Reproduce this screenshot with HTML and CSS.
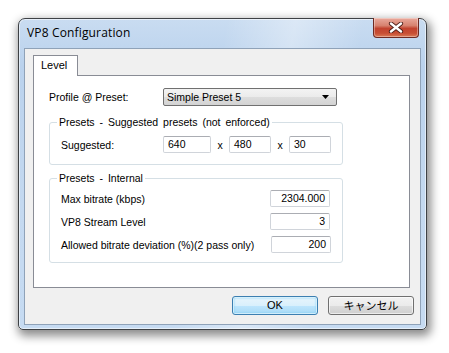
FILE: index.html
```html
<!DOCTYPE html>
<html>
<head>
<meta charset="utf-8">
<link rel="stylesheet" href="styles.css">
</head>
<body>
<div class="desk">
  <div class="window">
    <div class="titlebar">
      <span class="title">VP8 Configuration</span>
      <div class="close">
        <svg width="16" height="11" viewBox="0 0 16 11">
          <path d="M3 1.5 L13 9.5 M13 1.5 L3 9.5" stroke="#4a1c16" stroke-width="4.2" stroke-linecap="round"/>
          <path d="M3 1.5 L13 9.5 M13 1.5 L3 9.5" stroke="#ffffff" stroke-width="2.4" stroke-linecap="round"/>
        </svg>
      </div>
    </div>
    <div class="client">
      <div class="tabs"><div class="tab">Level</div></div>
      <div class="panel">
        <div class="profile">
          <span class="lbl">Profile @ Preset:</span>
          <div class="select">
            <span>Simple Preset 5</span>
            <svg width="8" height="5" viewBox="0 0 8 5"><path d="M0 0 H7 L3.5 4 Z" fill="#000"/></svg>
          </div>
        </div>
        <div class="group g1">
          <span class="legend">Presets - Suggested presets (not enforced)</span>
          <div class="sugg">
            <span class="lbl">Suggested:</span>
            <div class="box w1">640</div>
            <span class="times">x</span>
            <div class="box w2">480</div>
            <span class="times">x</span>
            <div class="box w2">30</div>
          </div>
        </div>
        <div class="group g2">
          <span class="legend">Presets - Internal</span>
          <div class="grid">
            <span class="lbl">Max bitrate (kbps)</span>
            <div class="box num">2304.000</div>
            <span class="lbl">VP8 Stream Level</span>
            <div class="box num">3</div>
            <span class="lbl">Allowed bitrate deviation (%)(2 pass only)</span>
            <div class="box num b3">200</div>
          </div>
        </div>
      </div>
      <div class="buttons">
        <div class="btn ok">OK</div>
        <div class="btn cancel">キャンセル</div>
      </div>
    </div>
  </div>
</div>
</body>
</html>
```

FILE: styles.css
```css
* { box-sizing: border-box; }
html, body { margin: 0; padding: 0; background: #ffffff; }
body { width: 449px; height: 353px; overflow: hidden; font-family: "Liberation Sans", Arial, sans-serif; font-size: 10.5px; color: #000; }

.desk { padding: 18px 0 0 18px; }

.window {
  width: 409px;
  height: 312px;
  border: 1px solid #3e4145;
  border-radius: 7px 7px 5px 5px;
  background:
    linear-gradient(100deg, rgba(255,255,255,0) 45%, rgba(255,255,255,0.35) 60%, rgba(255,255,255,0) 75%),
    linear-gradient(180deg, #c9dcf1 0%, #bad2ed 15%, #c4d9f0 60%, #c6dbf2 100%);
  box-shadow: 2px 4px 10px 2px rgba(0,0,0,0.45), inset 0 0 0 1px rgba(255,255,255,0.55);
  padding: 0 5px 4px 5px;
  display: flex;
  flex-direction: column;
}

.titlebar {
  height: 29px;
  display: flex;
  align-items: flex-start;
}
.title {
  font-family: "Open Sans", "Noto Sans", sans-serif;
  font-size: 12px;
  color: #000;
  padding-left: 3px;
  margin-top: 5px;
  letter-spacing: 0.15px;
}
.close {
  margin-left: auto;
  margin-right: 2px;
  width: 46px;
  height: 20px;
  margin-top: -1px;
  border: 1px solid #6e2a22;
  border-top: none;
  border-radius: 0 0 4px 4px;
  background: linear-gradient(180deg, #e9a99c 0%, #d7826f 40%, #c2432f 55%, #c74e33 80%, #da7a56 100%);
  box-shadow: inset 0 0 0 1px rgba(255,255,255,0.35);
  display: flex;
  align-items: center;
  justify-content: center;
}

.client {
  flex: 1;
  border: 1px solid #8fa2b8;
  background: #f0f0f0;
  display: flex;
  flex-direction: column;
}

.tabs { padding: 6px 0 0 8px; height: 26px; display: flex; }
.tab {
  width: 45px;
  height: 21px;
  border: 1px solid #898c95;
  border-bottom: none;
  background: #ffffff;
  padding: 3px 0 0 7px;
  font-size: 11px;
  margin-bottom: -1px;
  position: relative;
  z-index: 1;
}

.panel {
  margin-left: 8px;
  width: 377px;
  height: 213px;
  border: 1px solid #898c95;
  background: #ffffff;
  padding: 12px 0 0 15px;
}

.profile { display: flex; align-items: center; height: 18px; }
.profile .lbl { width: 114px; }
.select {
  width: 174px;
  height: 18px;
  border: 1px solid #707070;
  border-radius: 2px;
  background: linear-gradient(180deg, #f3f3f3 0%, #ebebeb 50%, #dddddd 51%, #d3d3d3 100%);
  display: flex;
  align-items: center;
  justify-content: space-between;
  padding: 0 6px 0 3px;
}

.group {
  width: 294px;
  border: 1px solid #d5dfe5;
  border-radius: 3px;
  padding: 0 0 0 11px;
}
.legend {
  display: inline-block;
  background: #fff;
  padding: 0 2px;
  margin-left: -4px;
  height: 13px;
  line-height: 13px;
  margin-top: -7px;
  vertical-align: top;
  word-spacing: 2px;
}
.g1 { margin-top: 16px; height: 43px; }
.g2 { margin-top: 13px; height: 85px; }

.sugg { display: flex; align-items: center; margin-top: 1px; height: 17px; }
.sugg .lbl { width: 102px; }
.times { width: 18px; text-align: center; }

.box {
  height: 17px;
  border: 1px solid #d0d4da;
  border-top-color: #abadb3;
  border-radius: 2px;
  background: #fff;
  padding: 0 4px;
  line-height: 15px;
}
.w1 { width: 48px; }
.w2 { width: 42px; }
.num { text-align: right; width: 60px; }

.grid {
  display: grid;
  grid-template-columns: 209px 60px;
  grid-auto-rows: 17px;
  row-gap: 6px;
  align-items: center;
  margin-top: -1px;
}
.b3 { margin-left: 1px; }

.buttons {
  display: flex;
  gap: 10px;
  padding: 8px 0 0 207px;
}
.btn {
  width: 86px;
  height: 19px;
  border-radius: 3px;
  text-align: center;
  line-height: 17px;
  font-size: 11px;
}
.ok {
  border: 1px solid #3c7fb1;
  background: linear-gradient(180deg, #e8f5fc 0%, #d9f0fc 50%, #bee6fd 51%, #a7d9f5 100%);
  box-shadow: inset 0 0 0 1px rgba(255,255,255,0.6), inset 0 0 2px 1px #7fd0f5;
}
.cancel {
  border: 1px solid #707070;
  background: linear-gradient(180deg, #f2f2f2 0%, #ebebeb 50%, #dddddd 51%, #cfcfcf 100%);
  box-shadow: inset 0 0 0 1px rgba(255,255,255,0.6);
  font-family: "Noto Sans CJK JP", sans-serif;
}
```
